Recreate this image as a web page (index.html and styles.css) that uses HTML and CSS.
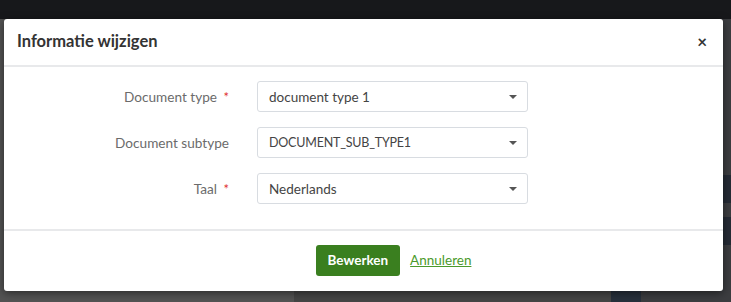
FILE: index.html
```html
<!DOCTYPE html>
<html lang="nl">
<head>
  <meta charset="UTF-8">
  <title>Informatie wijzigen</title>
  <link rel="stylesheet" href="styles.css">
</head>
<body>
  <!-- Dimmed page behind the modal -->
  <div class="backdrop">
    <div class="topbar"></div>
    <div class="page">
      <div class="page-left"></div>
      <div class="page-mid"></div>
      <div class="page-right">
        <span class="ghost">ne</span>
        <span class="ghost">in</span>
        <span class="ghost band">n</span>
        <span class="ghost band">n</span>
      </div>
    </div>
  </div>

  <!-- Modal -->
  <div class="modal">
    <div class="modal-header">
      <h3>Informatie wijzigen</h3>
      <span class="close">&times;</span>
    </div>

    <form class="modal-body">
      <label class="label">Document type <span class="req">*</span></label>
      <div class="select">
        <span>document type 1</span>
        <span class="caret"></span>
      </div>

      <label class="label">Document subtype</label>
      <div class="select">
        <span class="caps">DOCUMENT_SUB_TYPE1</span>
        <span class="caret"></span>
      </div>

      <label class="label">Taal <span class="req">*</span></label>
      <div class="select">
        <span>Nederlands</span>
        <span class="caret"></span>
      </div>
    </form>

    <div class="modal-footer">
      <button type="button" class="button">Bewerken</button>
      <a href="#" class="link">Annuleren</a>
    </div>
  </div>
</body>
</html>
```

FILE: styles.css
```css
/* General Styles */
* {
  margin: 0;
  padding: 0;
  box-sizing: border-box;
}

body {
  font-family: Lato, "Open Sans", Arial, sans-serif;
  width: 731px;
  height: 302px;
  overflow: hidden;
  background-color: #4b4b4b;
  position: relative;
}

/* Backdrop */
.backdrop {
  display: flex;
  flex-direction: column;
  height: 100%;
}

.topbar {
  height: 19px;
  background-color: #17181b;
}

.page {
  flex: 1;
  display: flex;
}

.page-left {
  width: 294px;
  background-color: #535353;
}

.page-mid {
  flex: 1;
  background-color: #454545;
  border-right: 30px solid #27303c;
  margin-top: 270px;
}

.page-right {
  width: 90px;
  background-color: #3c3d40;
  display: flex;
  flex-direction: column;
  padding-top: 72px;
  gap: 14px;
  font-size: 14px;
  color: #1e1f22;
}

.ghost {
  padding-left: 32px;
  height: 28px;
  line-height: 28px;
}

.band {
  background-color: #252b35;
}

/* Modal */
.modal {
  position: absolute;
  left: 4px;
  top: 19px;
  width: 719px;
  height: 272px;
  background: white;
  border-radius: 3px;
  box-shadow: 0 2px 8px rgba(0, 0, 0, 0.5);
  display: flex;
  flex-direction: column;
}

.modal-header {
  height: 48px;
  display: flex;
  align-items: center;
  justify-content: space-between;
  padding: 0 16px 2px 13px;
  border-bottom: 2px solid #e8e9eb;
}

.modal-header h3 {
  font-size: 16.5px;
  font-weight: 700;
  color: #333;
}

.close {
  font-size: 17px;
  font-weight: 700;
  color: #333;
}

.modal-body {
  display: grid;
  grid-template-columns: 225px 271px;
  column-gap: 28px;
  row-gap: 15px;
  align-items: center;
  padding: 14px 0 25px;
  border-bottom: 2px solid #e8e9eb;
}

.label {
  text-align: right;
  font-size: 13.6px;
  color: #6b6b6b;
}

.req {
  color: #e03131;
  margin-left: 3px;
  font-size: 13px;
}

.select {
  height: 31px;
  border: 1px solid #d8dce1;
  border-radius: 3px;
  display: flex;
  align-items: center;
  justify-content: space-between;
  padding: 0 10px 0 11px;
  font-size: 13.5px;
  color: #444;
}

.caps {
  font-size: 12.5px;
  letter-spacing: -0.2px;
}

.caret {
  width: 0;
  height: 0;
  border-left: 4px solid transparent;
  border-right: 4px solid transparent;
  border-top: 4px solid #555;
}

.modal-footer {
  flex: 1;
  display: flex;
  align-items: center;
  justify-content: center;
  gap: 10px;
  padding: 0 0 2px 60px;
}

.button {
  height: 31px;
  padding: 0 12px;
  border: none;
  border-radius: 3px;
  background-color: #3a7f1f;
  color: white;
  font-family: inherit;
  font-size: 13.5px;
  font-weight: 700;
}

.link {
  color: #4b9a2c;
  font-size: 13.5px;
  text-decoration: underline;
}
```
